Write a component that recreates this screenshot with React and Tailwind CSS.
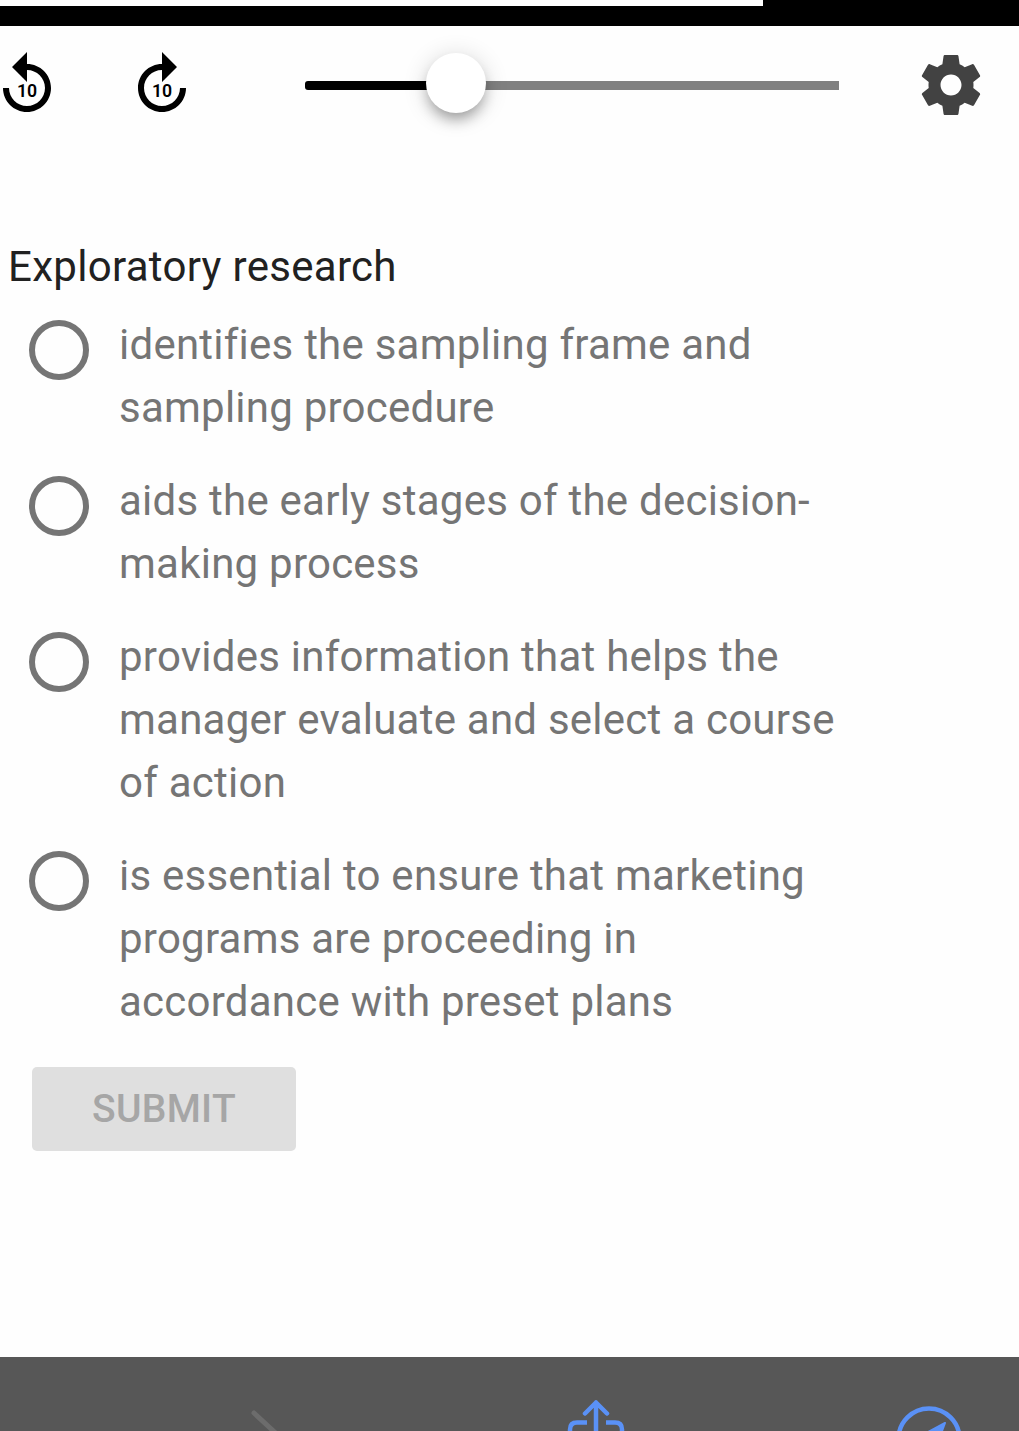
import React from 'react';

const options = [
    'identifies the sampling frame and sampling procedure',
    'aids the early stages of the decision-making process',
    'provides information that helps the manager evaluate and select a course of action',
    'is essential to ensure that marketing programs are proceeding in accordance with preset plans',
];

const SkipIcon = ({ forward }) => (
    <svg className="size-[72px] shrink-0" viewBox="0 0 24 24">
        <path
            transform={forward ? 'matrix(-1 0 0 1 24 0)' : undefined}
            d="M12 5V1L7 6l5 5V7c3.31 0 6 2.69 6 6s-2.69 6-6 6-6-2.69-6-6H4c0 4.420 3.580 8 8 8s8-3.580 8-8-3.580-8-8-8z"
        />
        <text x="12" y="15.95" textAnchor="middle" fontSize="5.9" fontWeight="600">10</text>
    </svg>
);

const PlayerControls = () => (
    <div className="flex items-center h-[118px]">
        <button className="-ml-[9px]"><SkipIcon /></button>
        <button className="ml-[63px]"><SkipIcon forward /></button>
        <div className="flex items-center ml-[107px] w-[534px]">
            <div className="h-[9px] w-[151px] bg-black rounded-l-[3px] mt-[1px]"></div>
            <div className="relative z-10 size-[60px] -mx-[30px] -mt-[4px] shrink-0 rounded-full bg-white shadow-[0_9px_14px_-3px_rgba(0,0,0,0.32),0_3px_24px_rgba(0,0,0,0.16)]"></div>
            <div className="h-[9px] flex-1 bg-[#808080] mt-[1px]"></div>
        </div>
        <button className="ml-[76px]">
            <svg className="size-[72px] fill-[#424242]" viewBox="0 0 24 24">
                <path d="M19.43 12.98c.04-.32.07-.64.07-.98s-.03-.66-.07-.98l2.11-1.65c.19-.15.24-.42.12-.64l-2-3.46c-.12-.22-.39-.3-.61-.22l-2.49 1c-.52-.4-1.08-.73-1.69-.98l-.38-2.65C14.46 2.18 14.25 2 14 2h-4c-.25 0-.46.18-.49.42l-.38 2.65c-.61.25-1.17.59-1.69.98l-2.49-1c-.23-.09-.49 0-.61.22l-2 3.46c-.13.22-.07.49.12.64l2.11 1.65c-.04.32-.07.65-.07.98s.03.66.07.98l-2.11 1.65c-.19.15-.24.42-.12.64l2 3.46c.12.22.39.3.61.22l2.49-1c.52.4 1.08.73 1.69.98l.38 2.65c.03.24.24.42.49.42h4c.25 0 .46-.18.49-.42l.38-2.65c.61-.25 1.17-.59 1.69-.98l2.49 1c.23.09.49 0 .61-.22l2-3.46c.12-.22.07-.49-.12-.64l-2.11-1.65zM12 15.5c-1.93 0-3.5-1.57-3.5-3.5s1.57-3.5 3.5-3.5 3.5 1.57 3.5 3.5-1.57 3.5-3.5 3.5z" />
            </svg>
        </button>
    </div>
);

const Question = () => (
    <div className="pt-[91px] text-[42px] leading-[63px] tracking-[0.24px]">
        <h1 className="pl-[8px] text-[#212121] tracking-[0.3px]">Exploratory research</h1>
        <div className="flex flex-col gap-[30px] mt-[15px] pl-[29px]">
            {options.map((option) => (
                <label key={option} className="flex items-start text-[#757575]">
                    <span className="size-[60px] mt-[7px] shrink-0 rounded-full border-[6px] border-[#757575]"></span>
                    <span className="ml-[30px] w-[730px]">{option}</span>
                </label>
            ))}
        </div>
        <button className="block mt-[34px] ml-[32px] h-[84px] w-[264px] rounded-[5px] bg-[#dfdfdf] text-[#a6a6a6] text-[39px] leading-[84px] font-medium tracking-[0.3px]">
            SUBMIT
        </button>
    </div>
);

const BrowserBar = () => (
    <div className="h-[74px] bg-[#575757]">
        <svg className="block w-full h-full" viewBox="0 0 1019 74" fill="none" strokeLinecap="round" strokeLinejoin="round">
            <path d="M254 56l28 26" stroke="#6c6c6c" strokeWidth="5" />
            <g stroke="#5a91f6" strokeWidth="4.5">
                <path d="M596 80V45.500M585 56.500l11-11 11 11" />
                <path d="M587 65.500h-10q-7 0-7 7v8M606 65.500h9q7 0 7 7v8" strokeLinecap="butt" />
                <circle cx="929" cy="82" r="30.500" />
            </g>
            <path d="M945 66l-30 16h24z" fill="#5a91f6" stroke="#5a91f6" strokeWidth="2" />
        </svg>
    </div>
);

const App = () => {
    return (
        <div className="flex flex-col h-[1431px] w-[1019px] overflow-hidden bg-[#fefefe] font-[Roboto,sans-serif]">
            <div className="h-[26px] bg-black">
                <div className="h-[6px] w-[763px] bg-white"></div>
            </div>
            <PlayerControls />
            <div className="flex-1">
                <Question />
            </div>
            <BrowserBar />
        </div>
    );
};

export default App;
